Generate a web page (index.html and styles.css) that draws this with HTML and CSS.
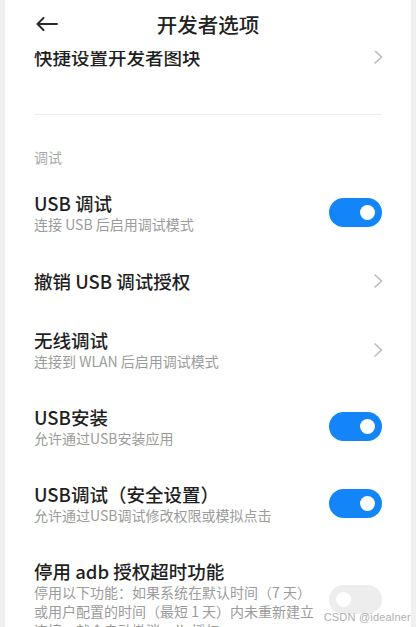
FILE: index.html
```html
<!DOCTYPE html>
<html lang="zh-CN">
<head>
  <meta charset="UTF-8" />
  <meta name="viewport" content="width=device-width, initial-scale=1.0"/>
  <title>开发者选项</title>
  <link rel="stylesheet" href="styles.css">
</head>
<body>

  <div class="page">
    <!-- TOP BAR -->
    <div class="topbar">
      <div class="back">
        <svg width="23" height="14" viewBox="0 0 23 14">
          <path d="M22 7H2.5M8.5 1L2.5 7l6 6" fill="none" stroke="#2b2b2b" stroke-width="2" stroke-linecap="round" stroke-linejoin="round"/>
        </svg>
      </div>
      <div class="title">开发者选项</div>
      <div></div>
    </div>

    <!-- SETTINGS LIST -->
    <div class="list">
      <div class="row cut">
        <div class="text">
          <div class="name">快捷设置开发者图块</div>
        </div>
        <svg class="chevron" width="10" height="16" viewBox="0 0 10 16">
          <path d="M1.5 1.5L8.5 8l-7 6.5" fill="none" stroke="#bdbdbd" stroke-width="1.6"/>
        </svg>
      </div>

      <div class="divider"></div>

      <div class="section">调试</div>

      <div class="row">
        <div class="text">
          <div class="name">USB 调试</div>
          <div class="desc">连接 USB 后启用调试模式</div>
        </div>
        <div class="switch on"><span class="knob"></span></div>
      </div>

      <div class="row single">
        <div class="text">
          <div class="name">撤销 USB 调试授权</div>
        </div>
        <svg class="chevron" width="10" height="16" viewBox="0 0 10 16">
          <path d="M1.5 1.5L8.5 8l-7 6.5" fill="none" stroke="#bdbdbd" stroke-width="1.6"/>
        </svg>
      </div>

      <div class="row">
        <div class="text">
          <div class="name">无线调试</div>
          <div class="desc">连接到 WLAN 后启用调试模式</div>
        </div>
        <svg class="chevron" width="10" height="16" viewBox="0 0 10 16">
          <path d="M1.5 1.5L8.5 8l-7 6.5" fill="none" stroke="#bdbdbd" stroke-width="1.6"/>
        </svg>
      </div>

      <div class="row">
        <div class="text">
          <div class="name">USB安装</div>
          <div class="desc">允许通过USB安装应用</div>
        </div>
        <div class="switch on"><span class="knob"></span></div>
      </div>

      <div class="row">
        <div class="text">
          <div class="name">USB调试（安全设置）</div>
          <div class="desc">允许通过USB调试修改权限或模拟点击</div>
        </div>
        <div class="switch on"><span class="knob"></span></div>
      </div>

      <div class="row">
        <div class="text">
          <div class="name">停用 adb 授权超时功能</div>
          <div class="desc">停用以下功能：如果系统在默认时间（7 天）或用户配置的时间（最短 1 天）内未重新建立连接，就会自动撤消 adb 授权。</div>
        </div>
        <div class="switch off"><span class="knob"></span></div>
      </div>
    </div>

    <div class="watermark">CSDN @idealner</div>
  </div>

</body>
</html>
```

FILE: styles.css
```css
body {
  font-family: "Noto Sans CJK SC", "Noto Sans", sans-serif;
  background-color: #f0f0f0;
  margin: 0;
  height: 627px;
  overflow: hidden;
  color: #1f1f1f;
}

.page {
  position: relative;
  margin: 0 5px;
  height: 627px;
  background-color: #ffffff;
  overflow: hidden;
}

/* top bar */
.topbar {
  display: grid;
  grid-template-columns: 1fr auto 1fr;
  align-items: center;
  height: 48px;
  padding-bottom: 3px;
}

.back {
  display: flex;
  align-items: center;
  padding-left: 30px;
}

.title {
  font-size: 20.5px;
  font-weight: 500;
  line-height: 24px;
  color: #222;
}

/* list */
.list {
  overflow: hidden;
  height: 576px;
}

.row {
  display: flex;
  align-items: center;
  gap: 10px;
  padding: 17px 29px 17px 29px;
}

.row.single {
  padding-top: 18px;
  padding-bottom: 18px;
}

.row.cut {
  margin-top: -6px;
  padding-top: 0;
}

.text {
  flex: 1;
  min-width: 0;
}

.name {
  font-size: 18.5px;
  font-weight: 500;
  line-height: 24px;
  color: #1f1f1f;
}

.desc {
  font-size: 14px;
  line-height: 19px;
  color: #9b9b9b;
}

.chevron {
  flex-shrink: 0;
  margin-right: -1px;
}

.divider {
  margin: 28px 29px 0;
  border-top: 1px solid #efefef;
}

.section {
  padding: 32px 29px 7px;
  font-size: 14px;
  line-height: 20px;
  color: #a8a8a8;
}

/* switches */
.switch {
  flex-shrink: 0;
  display: flex;
  align-items: center;
  box-sizing: border-box;
  width: 53px;
  height: 29px;
  padding: 0 7px;
  border-radius: 15px;
}

.switch.on {
  background-color: #1485f8;
  justify-content: flex-end;
}

.switch.off {
  background-color: #ededed;
  justify-content: flex-start;
}

.knob {
  width: 15px;
  height: 15px;
  border-radius: 50%;
  background-color: #ffffff;
}

.watermark {
  position: absolute;
  right: 0;
  bottom: 4px;
  font-family: "Liberation Sans", sans-serif;
  font-size: 11px;
  color: #b0b0b0;
  letter-spacing: 0.2px;
}
```
